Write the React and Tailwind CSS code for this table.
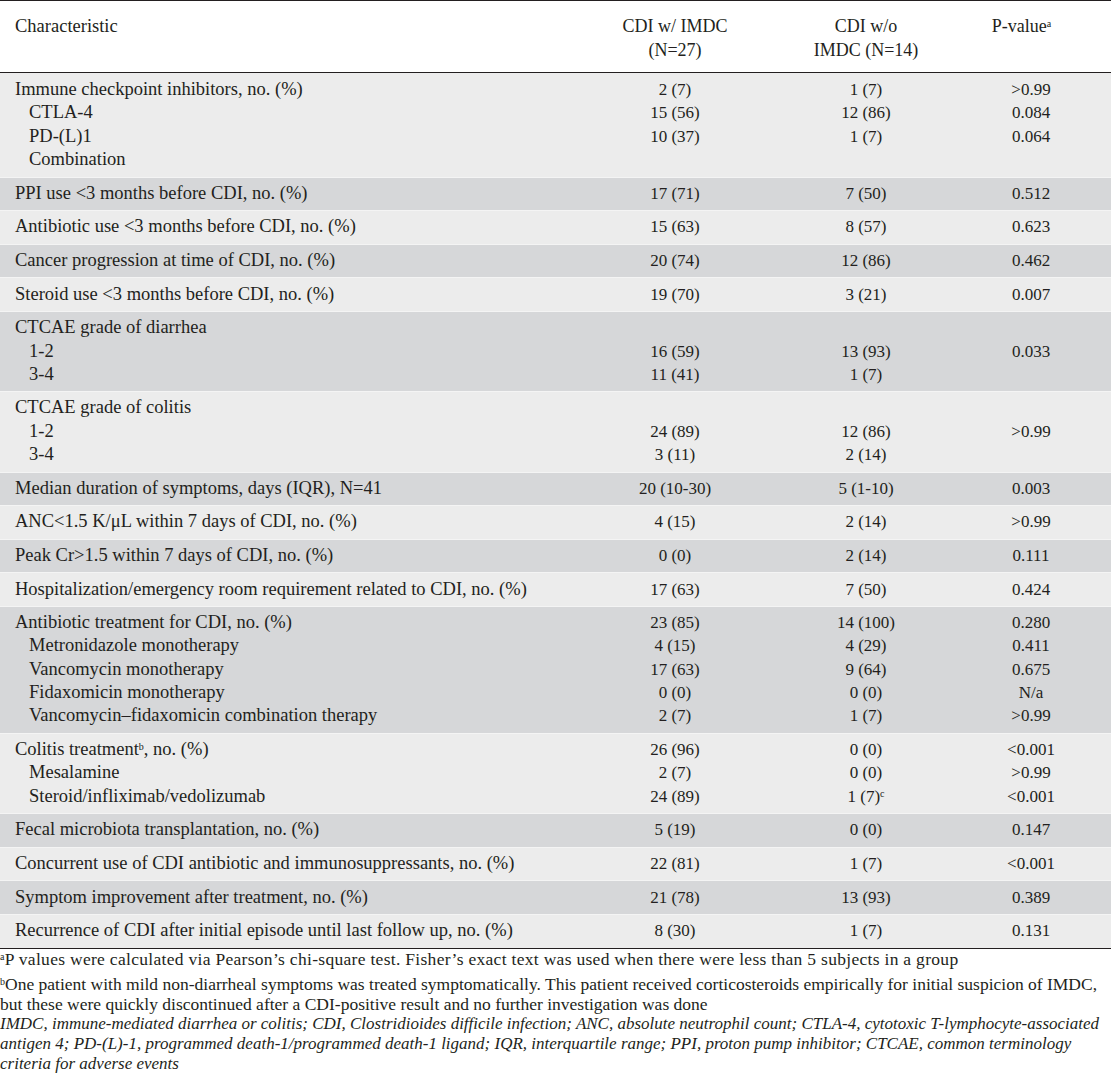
import React from "react";

const rows = [
  {
    shade: "light",
    lines: [
      ["Immune checkpoint inhibitors, no. (%)", "2 (7)", "1 (7)", ">0.99"],
      ["CTLA-4", "15 (56)", "12 (86)", "0.084", true],
      ["PD-(L)1", "10 (37)", "1 (7)", "0.064", true],
      ["Combination", "", "", "", true],
    ],
  },
  { shade: "dark", lines: [["PPI use <3 months before CDI, no. (%)", "17 (71)", "7 (50)", "0.512"]] },
  { shade: "light", lines: [["Antibiotic use <3 months before CDI, no. (%)", "15 (63)", "8 (57)", "0.623"]] },
  { shade: "dark", lines: [["Cancer progression at time of CDI, no. (%)", "20 (74)", "12 (86)", "0.462"]] },
  { shade: "light", lines: [["Steroid use <3 months before CDI, no. (%)", "19 (70)", "3 (21)", "0.007"]] },
  {
    shade: "dark",
    lines: [
      ["CTCAE grade of diarrhea", "", "", ""],
      ["1-2", "16 (59)", "13 (93)", "0.033", true],
      ["3-4", "11 (41)", "1 (7)", "", true],
    ],
  },
  {
    shade: "light",
    lines: [
      ["CTCAE grade of colitis", "", "", ""],
      ["1-2", "24 (89)", "12 (86)", ">0.99", true],
      ["3-4", "3 (11)", "2 (14)", "", true],
    ],
  },
  { shade: "dark", lines: [["Median duration of symptoms, days (IQR), N=41", "20 (10-30)", "5 (1-10)", "0.003"]] },
  { shade: "light", lines: [["ANC<1.5 K/μL within 7 days of CDI, no. (%)", "4 (15)", "2 (14)", ">0.99"]] },
  { shade: "dark", lines: [["Peak Cr>1.5 within 7 days of CDI, no. (%)", "0 (0)", "2 (14)", "0.111"]] },
  { shade: "light", lines: [["Hospitalization/emergency room requirement related to CDI, no. (%)", "17 (63)", "7 (50)", "0.424"]] },
  {
    shade: "dark",
    lines: [
      ["Antibiotic treatment for CDI, no. (%)", "23 (85)", "14 (100)", "0.280"],
      ["Metronidazole monotherapy", "4 (15)", "4 (29)", "0.411", true],
      ["Vancomycin monotherapy", "17 (63)", "9 (64)", "0.675", true],
      ["Fidaxomicin monotherapy", "0 (0)", "0 (0)", "N/a", true],
      ["Vancomycin–fidaxomicin combination therapy", "2 (7)", "1 (7)", ">0.99", true],
    ],
  },
  {
    shade: "light",
    lines: [
      [
        <>
          Colitis treatment<sup className="text-[10px]">b</sup>, no. (%)
        </>,
        "26 (96)",
        "0 (0)",
        "<0.001",
      ],
      ["Mesalamine", "2 (7)", "0 (0)", ">0.99", true],
      [
        "Steroid/infliximab/vedolizumab",
        "24 (89)",
        <>
          1 (7)<sup className="text-[10px]">c</sup>
        </>,
        "<0.001",
        true,
      ],
    ],
  },
  { shade: "dark", lines: [["Fecal microbiota transplantation, no. (%)", "5 (19)", "0 (0)", "0.147"]] },
  { shade: "light", lines: [["Concurrent use of CDI antibiotic and immunosuppressants, no. (%)", "22 (81)", "1 (7)", "<0.001"]] },
  { shade: "dark", lines: [["Symptom improvement after treatment, no. (%)", "21 (78)", "13 (93)", "0.389"]] },
  { shade: "light", lines: [["Recurrence of CDI after initial episode until last follow up, no. (%)", "8 (30)", "1 (7)", "0.131"]] },
];

function Row({ shade, lines, first }) {
  const bg = shade === "dark" ? "bg-[#d6d7d9]" : "bg-[#ececec]";
  return (
    <div
      className={`${bg} flex ${
        first ? "pt-[5.15px]" : "pt-[4.15px] border-t border-[#f4f4f4]"
      } pb-[5.15px]`}
    >
      <div className="flex-1 pl-[15px] text-[18.5px]">
        {lines.map((l, i) => (
          <div key={i} className={`h-[23.33px] whitespace-nowrap ${l[4] ? "pl-[14px]" : ""}`}>
            {l[0]}
          </div>
        ))}
      </div>
      <div className="w-[190px] text-center">
        {lines.map((l, i) => (
          <div key={i} className="h-[23.33px] whitespace-nowrap">
            {l[1]}
          </div>
        ))}
      </div>
      <div className="w-[192px] text-center">
        {lines.map((l, i) => (
          <div key={i} className="h-[23.33px] whitespace-nowrap">
            {l[2]}
          </div>
        ))}
      </div>
      <div className="w-[149px] pr-[11px] text-center">
        {lines.map((l, i) => (
          <div key={i} className="h-[23.33px] whitespace-nowrap">
            {l[3]}
          </div>
        ))}
      </div>
    </div>
  );
}

export default function App() {
  return (
    <div
      className="w-[1111px] h-[1087px] bg-white text-[#231f20] text-[17px] leading-[23.33px] overflow-hidden"
      style={{ fontFamily: '"Liberation Serif", "Times New Roman", serif' }}
    >
      <div className="border-t-[1.5px] border-b border-[#231f20]">
        <div className="flex h-[71px] pt-[13px] leading-[24px] text-[18px]">
          <div className="flex-1 pl-[15px] text-[18.5px]">Characteristic</div>
          <div className="w-[190px] text-center">
            CDI w/ IMDC
            <br />
            (N=27)
          </div>
          <div className="w-[192px] text-center">
            CDI w/o
            <br />
            IMDC (N=14)
          </div>
          <div className="w-[149px] pr-[30px] text-center">
            P-value<sup className="text-[10px]">a</sup>
          </div>
        </div>
      </div>
      <div className="border-b border-[#231f20]">
        {rows.map((r, i) => (
          <Row key={i} first={i === 0} {...r} />
        ))}
      </div>
      <div className="text-[17.5px] leading-[20px] whitespace-nowrap">
        <p className="tracking-[0.3px]">
          <sup className="text-[10px]">a</sup>P values were calculated via Pearson’s chi-square test. Fisher’s exact text was used when there were less than 5 subjects in a group
        </p>
        <p className="mt-[5px]">
          <sup className="text-[10px]">b</sup>One patient with mild non-diarrheal symptoms was treated symptomatically. This patient received corticosteroids empirically for initial suspicion of IMDC,
          <br />
          but these were quickly discontinued after a CDI-positive result and no further investigation was done
        </p>
        <p className="italic text-[17px]">
          IMDC, immune-mediated diarrhea or colitis; CDI, Clostridioides difficile infection; ANC, absolute neutrophil count; CTLA-4, cytotoxic T-lymphocyte-associated
          <br />
          antigen 4; PD-(L)-1, programmed death-1/programmed death-1 ligand; IQR, interquartile range; PPI, proton pump inhibitor; CTCAE, common terminology
          <br />
          criteria for adverse events
        </p>
      </div>
    </div>
  );
}
